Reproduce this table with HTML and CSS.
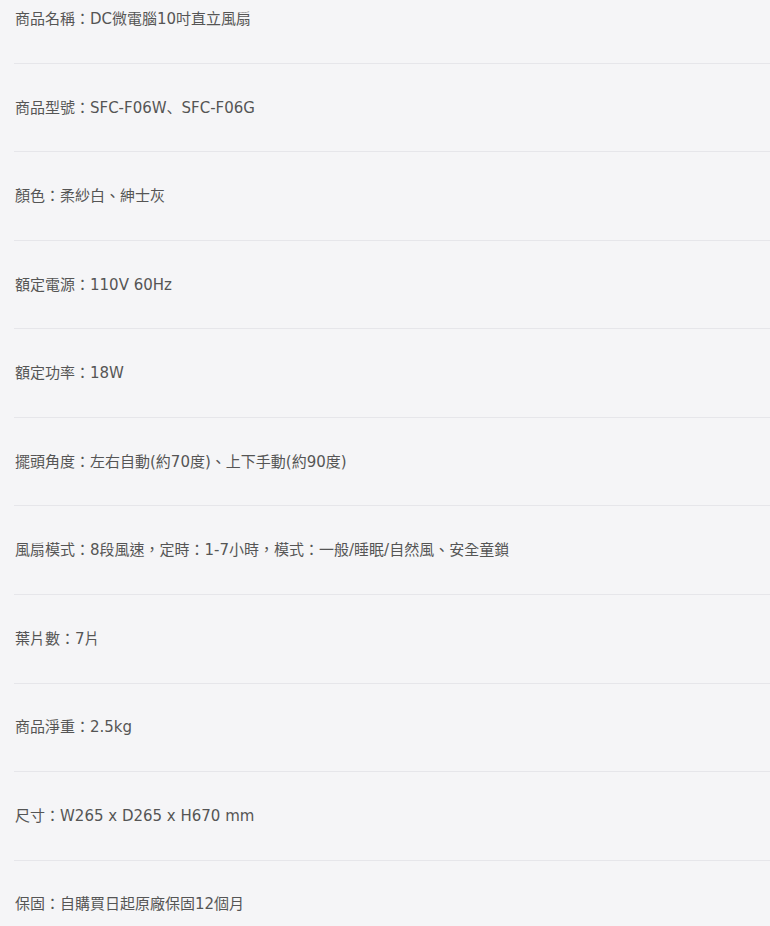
FILE: index.html
```html
<!DOCTYPE html>
<html lang="zh-Hant">
<head>
  <meta charset="UTF-8">
  <meta name="viewport" content="width=device-width, initial-scale=1.0">
  <title>商品規格</title>
  <link rel="stylesheet" href="styles.css">
</head>
<body>
  <ul class="spec-list">
    <li class="spec-item">商品名稱：DC微電腦10吋直立風扇</li>
    <li class="spec-item">商品型號：SFC-F06W、SFC-F06G</li>
    <li class="spec-item">顏色：柔紗白、紳士灰</li>
    <li class="spec-item">額定電源：110V 60Hz</li>
    <li class="spec-item">額定功率：18W</li>
    <li class="spec-item">擺頭角度：左右自動(約70度)、上下手動(約90度)</li>
    <li class="spec-item">風扇模式：8段風速，定時：1-7小時，模式：一般/睡眠/自然風、安全童鎖</li>
    <li class="spec-item">葉片數：7片</li>
    <li class="spec-item">商品淨重：2.5kg</li>
    <li class="spec-item">尺寸：W265 x D265 x H670 mm</li>
    <li class="spec-item">保固：自購買日起原廠保固12個月</li>
  </ul>
</body>
</html>
```

FILE: styles.css
```css
* { margin: 0; padding: 0; box-sizing: border-box; }
html, body { background: #f5f5f7; }
body { font-family: "DejaVu Sans", "Noto Sans CJK JP", sans-serif; color: #555; font-size: 15px; overflow: hidden; }
.spec-list { list-style: none; margin-left: 14px; }
.spec-item { line-height: 20px; padding: 33.8px 0 33.76px 1px; border-bottom: 1px solid #e6e6ea; white-space: nowrap; }
.spec-item:first-child { padding-top: 9px; }
.spec-item:last-child { border-bottom: none; }
```
